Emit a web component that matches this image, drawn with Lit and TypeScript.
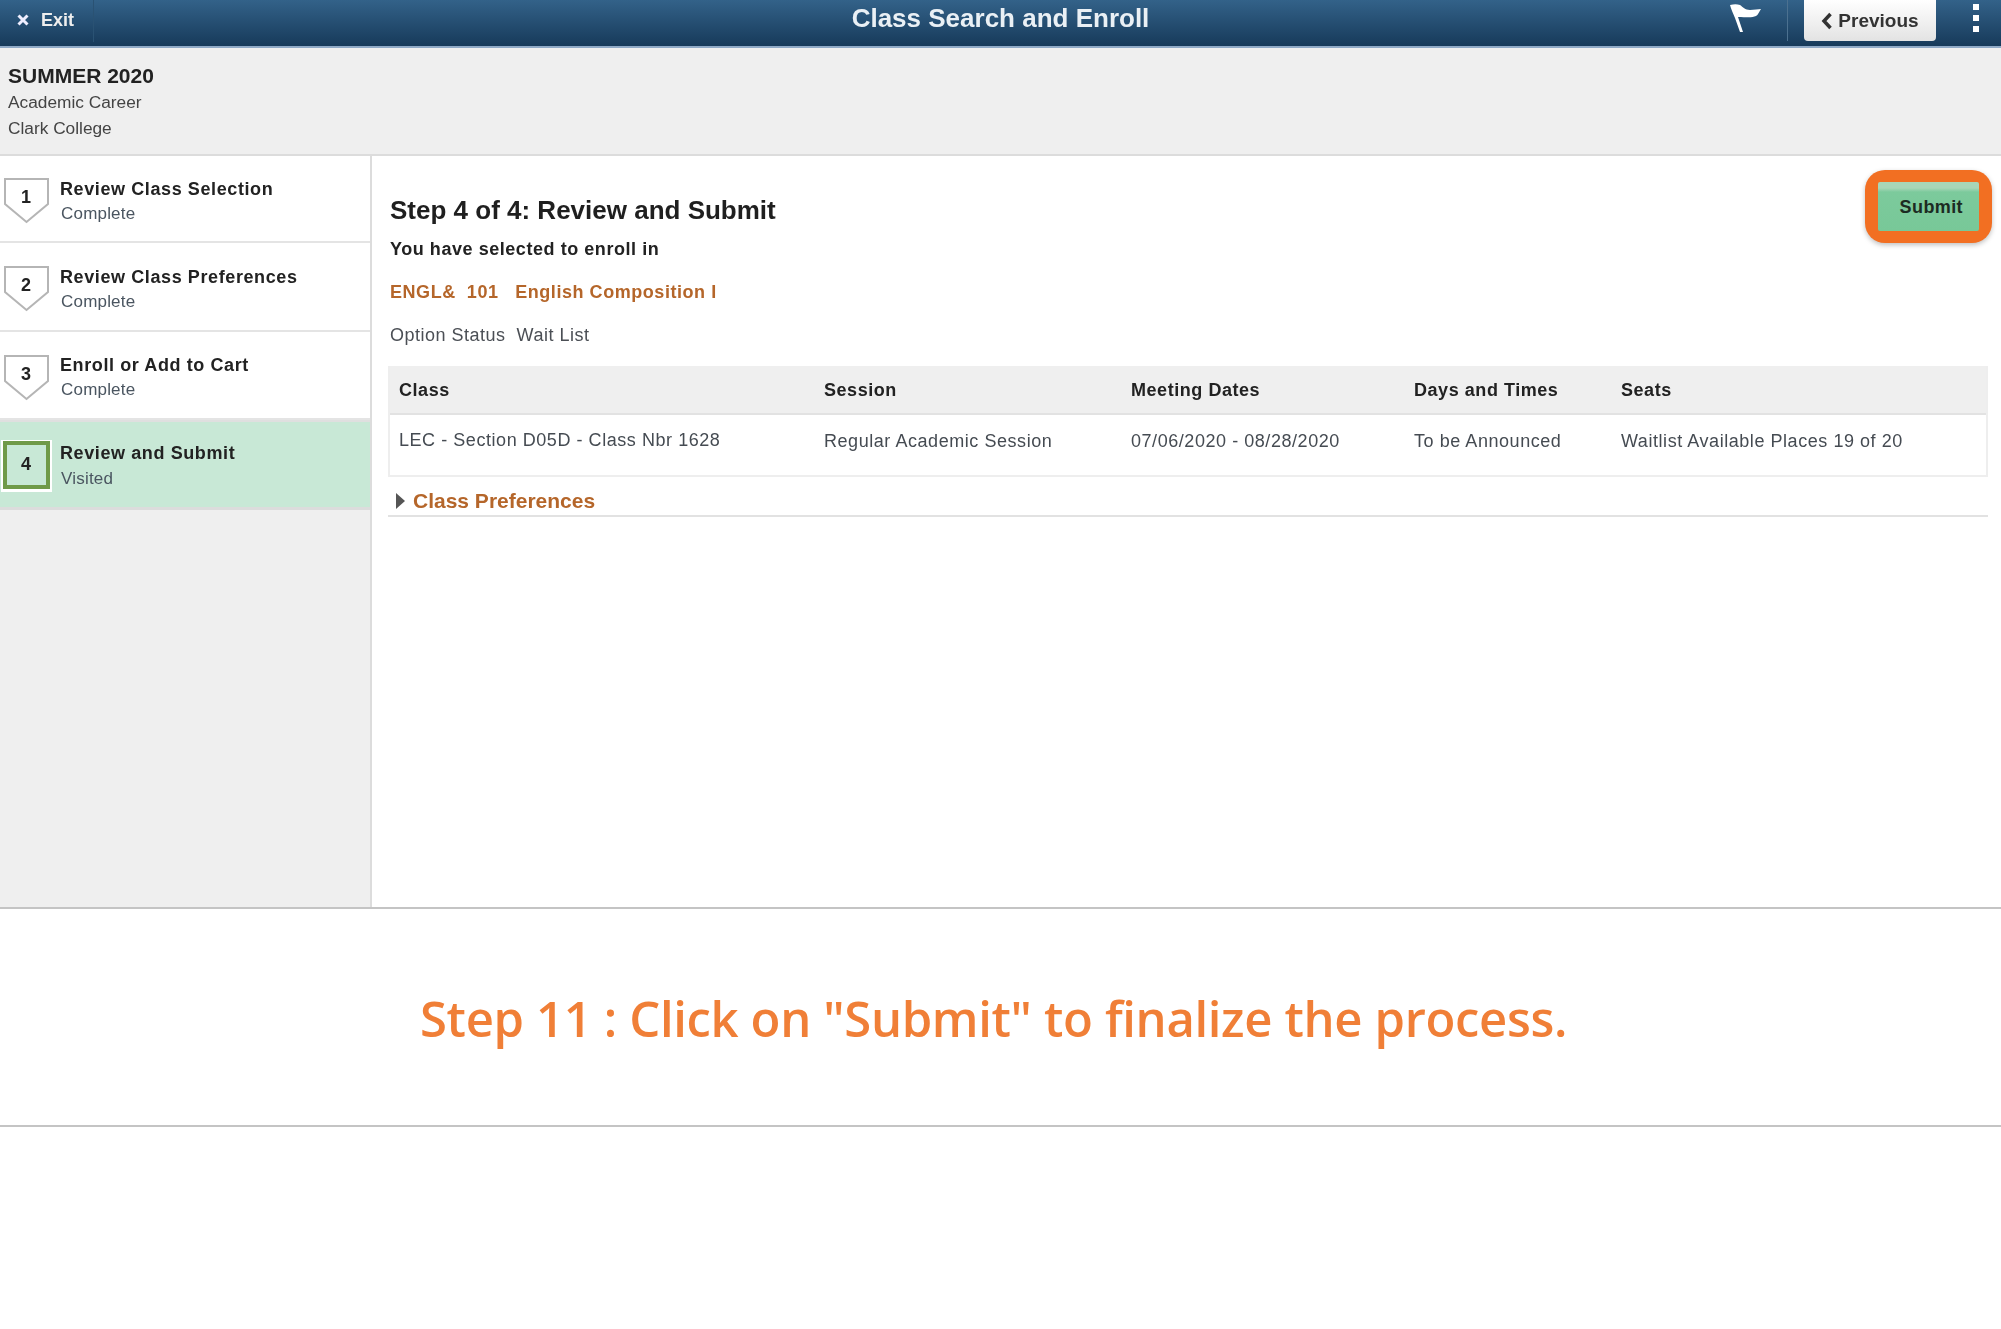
import { LitElement, html, css } from "lit";
import { customElement } from "lit/decorators.js";

const steps = [
  { n: "1", t: "Review Class Selection", s: "Complete" },
  { n: "2", t: "Review Class Preferences", s: "Complete" },
  { n: "3", t: "Enroll or Add to Cart", s: "Complete" },
];

@customElement("app-root")
export class AppRoot extends LitElement {
  static styles = css`
    :host { display: block; width: 2001px; height: 1329px; background: #fff; font-family: "Liberation Sans", Arial, sans-serif; color: #333; overflow: hidden; }
    .app { height: 907px; display: flex; flex-direction: column; border-bottom: 2px solid #c4c4c4; }
    .banner { height: 46px; flex: none; display: flex; align-items: center; background: linear-gradient(#336289, #173a5a); border-bottom: 2px solid #8fa9c6; position: relative; }
    .exit { width: 94px; height: 42px; display: flex; align-items: center; gap: 11px; padding: 0 0 2px 16px; box-sizing: border-box; border-right: 1px solid #2a5273; color: #eee; font-size: 18px; font-weight: bold; margin-top: -4px; }
    .title { position: absolute; left: 0; right: 0; top: 3px; text-align: center; color: #eaf0f5; font-size: 26px; font-weight: bold; }
    .right { margin-left: auto; display: flex; align-items: flex-start; height: 100%; }
    .flag { margin: 3px 25px 0 0; display: block; }
    .sep { width: 1px; height: 41px; background: #4c7190; margin-right: 16px; }
    .prev { width: 132px; height: 41px; box-sizing: border-box; display: flex; align-items: center; justify-content: center; gap: 5px; background: linear-gradient(#fff, #e3e3e3); border-radius: 0 0 4px 4px; color: #333; font-size: 19px; font-weight: bold; }
    .dots { width: 65px; box-sizing: border-box; padding: 4px 0 0 37px; display: flex; flex-direction: column; gap: 5px; }
    .dots i { width: 6px; height: 6px; background: #fff; display: block; }
    .career { height: 108px; flex: none; box-sizing: border-box; background: #efefef; border-bottom: 2px solid #dcdcdc; padding: 15px 8px 0; font-size: 17.3px; color: #444; line-height: 26px; }
    .career b { display: block; font-size: 21px; color: #222; line-height: 26px; }
    .body { flex: 1; display: flex; min-height: 0; }
    .side { width: 370px; flex: none; background: #efefef; border-right: 2px solid #dcdcdc; }
    .step { height: 85px; background: #fff; border-bottom: 2px solid #e4e4e4; display: flex; align-items: flex-start; }
    .step.s2 { height: 87px; }
    .step.s3 { height: 86px; }
    .step.on { background: #c8e8d6; height: 85px; border-bottom: 3px solid #dcdcdc; border-top: 2px solid #dfdfdf; }
    .ico { width: 46px; height: 46px; margin: 22px 0 0 3px; position: relative; flex: none; }
    .s2 .ico, .s3 .ico { margin-top: 23px; }
    .on .ico { margin: 21px 0 0 3px; }
    .ico svg { display: block; overflow: visible; }
    .ico span { position: absolute; left: 0; right: 0; top: 9px; text-align: center; font-size: 18px; font-weight: bold; color: #222; }
    .on .ico span { top: 11px; }
    .txt { margin: 21px 0 0 11px; font-size: 17px; line-height: 25px; color: #4a5560; letter-spacing: .2px; }
    .s2 .txt { margin-top: 22px; }
    .on .txt { margin-top: 19px; }
    .on .txt b { margin-bottom: 1px; }
    .txt b { display: block; font-size: 18px; line-height: 24px; color: #222; letter-spacing: .6px; }
    .txt span { padding-left: 1px; }
    .main { flex: 1; position: relative; padding: 39px 13px 0 18px; min-width: 0; }
    h1 { margin: 0; font-size: 26px; line-height: 30px; font-weight: bold; color: #1f1f1f; }
    .sel { margin-top: 13px; font-size: 18px; line-height: 22px; font-weight: bold; color: #222; letter-spacing: .55px; }
    .course { margin-top: 21px; font-size: 18px; line-height: 22px; font-weight: bold; color: #b5662a; white-space: pre; letter-spacing: .55px; }
    .opt { margin-top: 21px; font-size: 18px; line-height: 22px; color: #4b4f55; white-space: pre; letter-spacing: .5px; }
    .tbl { margin: 20px 0 0 -2px; border: 2px solid #eeeeee; border-top: none; }
    .row { display: grid; grid-template-columns: 425px 307px 283px 207px 1fr; padding-left: 9px; font-size: 18px; letter-spacing: .55px; }
    .head { padding-top: 2px; height: 45px; background: #efefef; border-bottom: 2px solid #e2e2e2; align-items: center; font-weight: bold; color: #222; }
    .data { height: 60px; align-items: start; color: #454b52; padding-top: 15px; box-sizing: border-box; }
    .data div + div { padding-top: 1px; }
    .prefs { margin: 10px 0 0 -2px; height: 28px; border-bottom: 2px solid #e2e2e2; display: flex; align-items: center; gap: 8px; padding-left: 8px; font-size: 21px; font-weight: bold; color: #b5662a; }
    .submit { position: absolute; top: 14px; right: 9px; width: 127px; height: 73px; box-sizing: border-box; padding: 12px 13px; background: #f26f22; border-radius: 20px; box-shadow: 0 2px 5px rgba(0,0,0,.25); }
    .btn { height: 100%; box-sizing: border-box; padding-top: 2px; border-radius: 2px; background: linear-gradient(#a8d6b8 0, #a8d6b8 6px, #7cca9c 10px, #78c898 100%); display: flex; align-items: center; justify-content: flex-end; padding-right: 16px; font-size: 18px; letter-spacing: .4px; font-weight: bold; color: #1c2b22; }
    .caption { height: 218px; box-sizing: border-box; padding: 1px 14px 0 0; display: flex; align-items: center; justify-content: center; border-bottom: 2px solid #c4c4c4; color: #f07f37; font-family: "Open Sans", sans-serif; font-size: 49px; letter-spacing: -.35px; font-weight: 600; }
    .soft { filter: blur(.7px); }
  `;

  private shield(n: string) {
    return html`<div class="ico">
      <svg width="46" height="46" viewBox="0 0 46 46"><path d="M2 1H45V26L23.500 44L2 26Z" fill="#fff" stroke="#b5b5b5" stroke-width="2"/></svg>
      <span>${n}</span>
    </div>`;
  }

  render() {
    return html`
      <div class="soft">
      <div class="app">
        <div class="banner">
          <div class="exit">
            <svg width="14" height="14" viewBox="0 0 14 14"><path d="M2.500 2.500L11.500 11.500M11.500 2.500L2.500 11.500" stroke="#eef" stroke-width="3"/></svg>
            <span>Exit</span>
          </div>
          <div class="title">Class Search and Enroll</div>
          <div class="right">
            <svg class="flag" width="32" height="30" viewBox="0 0 32 30"><path d="M0 2C4 1 7 1 10 2C13 4 15 7 20 7C24 7 28 6 31 6C29 9 28 12 26 13C22 15 16 14 8 14L13 29L10 29L5 15C3 10 1 6 0 2Z" fill="#fff"/></svg>
            <div class="sep"></div>
            <div class="prev">
              <svg width="12" height="18" viewBox="0 0 12 18"><path d="M9.500 2L3 9L9.500 16" fill="none" stroke="#333" stroke-width="3.500"/></svg>
              <span>Previous</span>
            </div>
            <div class="dots"><i></i><i></i><i></i></div>
          </div>
        </div>
        <div class="career"><b>SUMMER 2020</b>Academic Career<br />Clark College</div>
        <div class="body">
          <div class="side">
            ${steps.map(
              (s) => html`<div class="step s${s.n}">
                ${this.shield(s.n)}
                <div class="txt"><b>${s.t}</b><span>${s.s}</span></div>
              </div>`
            )}
            <div class="step on">
              <div class="ico">
                <svg width="46" height="46" viewBox="0 0 46 46"><rect x="-2" y="-3" width="51" height="52" fill="#fff"/><rect x="2" y="0" width="43" height="44" fill="#c8e8d6" stroke="#6f9a48" stroke-width="4"/></svg>
                <span>4</span>
              </div>
              <div class="txt"><b>Review and Submit</b><span>Visited</span></div>
            </div>
          </div>
          <div class="main">
            <h1>Step 4 of 4: Review and Submit</h1>
            <div class="sel">You have selected to enroll in</div>
            <div class="course">ENGL&amp;  101   English Composition I</div>
            <div class="opt">Option Status  Wait List</div>
            <div class="tbl">
              <div class="row head"><div>Class</div><div>Session</div><div>Meeting Dates</div><div>Days and Times</div><div>Seats</div></div>
              <div class="row data"><div>LEC - Section D05D - Class Nbr 1628</div><div>Regular Academic Session</div><div>07/06/2020 - 08/28/2020</div><div>To be Announced</div><div>Waitlist Available Places 19 of 20</div></div>
            </div>
            <div class="prefs">
              <svg width="9" height="16" viewBox="0 0 9 16"><path d="M0 0L9 8L0 16Z" fill="#555"/></svg>
              <span>Class Preferences</span>
            </div>
            <div class="submit"><div class="btn">Submit</div></div>
          </div>
        </div>
      </div>
      <div class="caption">Step 11 : Click on "Submit" to finalize the process.</div>
      </div>
    `;
  }
}
